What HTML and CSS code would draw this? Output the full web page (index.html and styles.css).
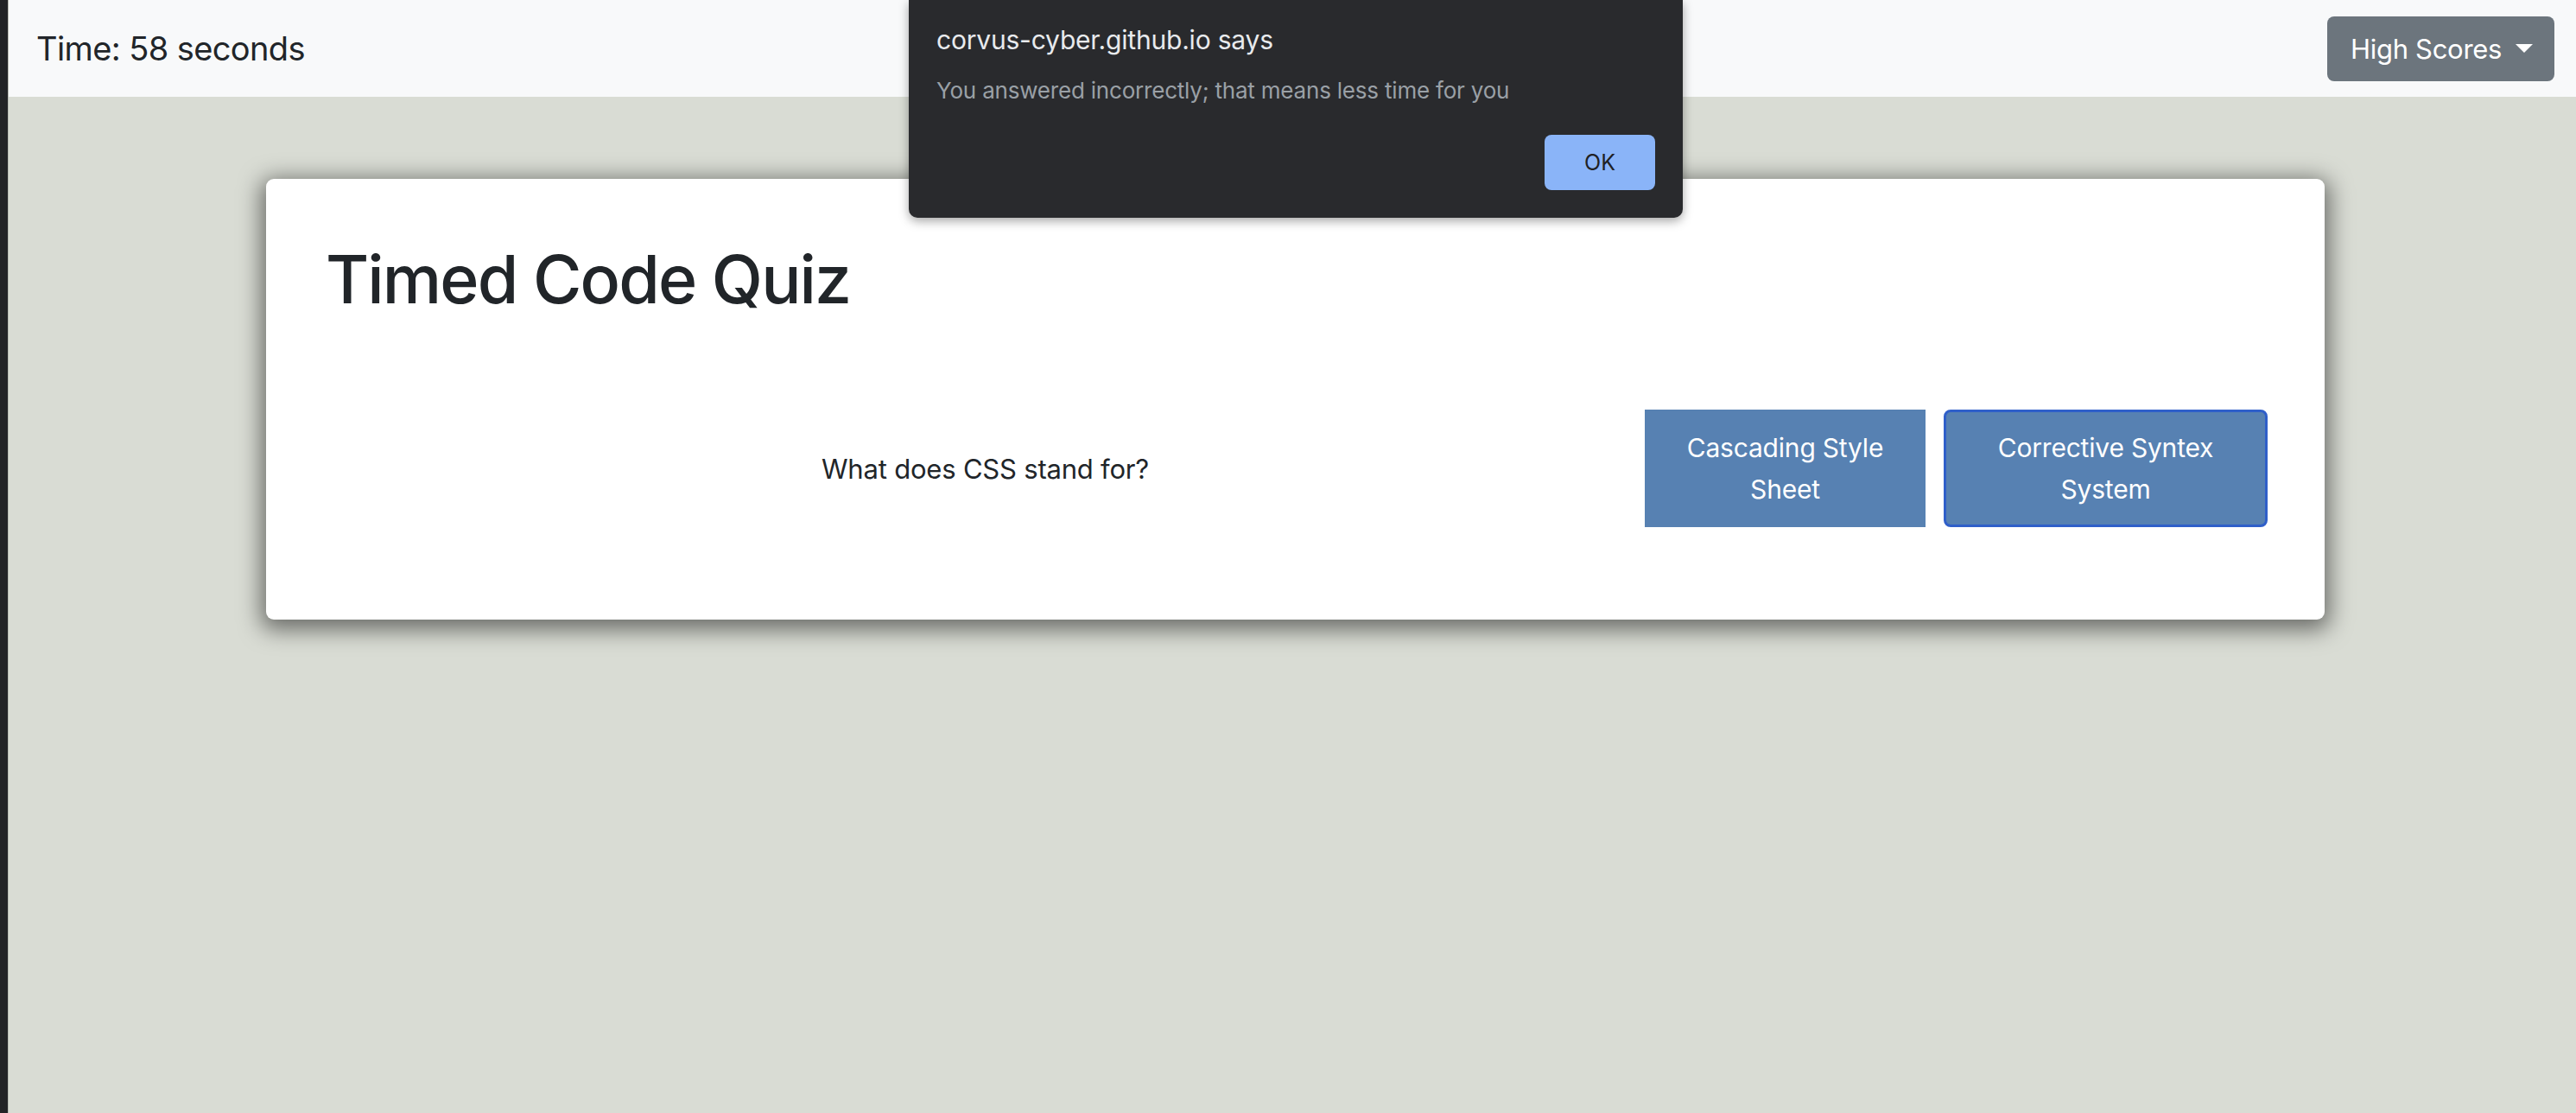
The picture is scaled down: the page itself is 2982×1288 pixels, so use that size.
FILE: index.html
```html
<!DOCTYPE html>
<html lang="en">
<head>
<meta charset="utf-8">
<title>Timed Code Quiz</title>
<link rel="stylesheet" href="styles.css">
</head>
<body>
<div class="screen">
  <div class="edge"></div>
  <div class="page">
    <nav class="navbar">
      <span class="brand">Time: 58 seconds</span>
      <button class="dd-btn">High Scores<span class="caret"></span></button>
    </nav>
    <main class="content">
      <section class="card">
        <h1 class="title">Timed Code Quiz</h1>
        <div class="qrow">
          <div class="question">What does CSS stand for?</div>
          <div class="answers">
            <button class="ans ans-a">Cascading Style Sheet</button>
            <button class="ans ans-b">Corrective Syntex System</button>
          </div>
        </div>
      </section>
    </main>
  </div>
  <div class="dialog">
    <div class="dlg-title">corvus-cyber.github.io says</div>
    <div class="dlg-msg">You answered incorrectly; that means less time for you</div>
    <div class="dlg-actions"><button class="dlg-ok">OK</button></div>
  </div>
</div>
</body>
</html>
```

FILE: styles.css
```css
* { box-sizing: border-box; }
html, body { margin: 0; padding: 0; }
body {
  width: 2982px;
  height: 1288px;
  overflow: hidden;
  font-family: Inter, "Liberation Sans", sans-serif;
  background: #d9dcd4;
}
.screen {
  position: relative;
  display: flex;
  width: 2982px;
  height: 1288px;
}
.edge {
  width: 10px;
  flex: 0 0 10px;
  background: #232427;
  border-right: 1px solid #b9bcb5;
}
.page {
  flex: 1;
  display: flex;
  flex-direction: column;
  background: #d9dcd4;
}
.navbar {
  height: 112px;
  flex: 0 0 112px;
  background: #f8f9fa;
  display: flex;
  align-items: center;
  justify-content: space-between;
  padding: 0 25px 0 32px;
}
.brand {
  font-size: 38px;
  color: #212529;
  letter-spacing: -0.6px;
  margin-top: -1px;
}
.dd-btn {
  height: 75px;
  width: 263px;
  border: none;
  border-radius: 8px;
  background: #6c757d;
  color: #ffffff;
  font-family: Inter, "Liberation Sans", sans-serif;
  font-size: 31px;
  display: flex;
  align-items: center;
  padding: 0 0 0 27px;
  letter-spacing: -0.3px;
}
.caret {
  width: 0;
  height: 0;
  margin-left: 16px;
  border-top: 10px solid #ffffff;
  border-left: 10px solid transparent;
  border-right: 10px solid transparent;
}
.content {
  flex: 1;
  padding: 95px 0 0 298px;
}
.card {
  width: 2383px;
  height: 510px;
  background: #ffffff;
  border-radius: 9px;
  box-shadow: 0 6px 26px 6px rgba(0, 0, 0, 0.5);
  padding: 68px 66px 0 69px;
}
.title {
  margin: 0;
  font-size: 77px;
  font-weight: 500;
  line-height: 96px;
  color: #212529;
  letter-spacing: -1.9px;
}
.qrow {
  display: flex;
  align-items: center;
  margin-top: 103px;
}
.question {
  flex: 1;
  text-align: center;
  font-size: 31px;
  color: #212529;
  letter-spacing: -0.2px;
}
.answers {
  display: flex;
  gap: 21px;
}
.ans {
  height: 136px;
  border: none;
  background: #5781b2;
  color: #ffffff;
  font-family: Inter, "Liberation Sans", sans-serif;
  font-size: 30px;
  line-height: 48px;
  padding: 0 30px;
  letter-spacing: -0.2px;
}
.ans-a { width: 325px; border-radius: 0; }
.ans-b {
  width: 375px;
  border: 3px solid #2f5fc9;
  border-radius: 8px;
}
.dialog {
  position: absolute;
  top: 0;
  left: 1052px;
  width: 896px;
  height: 252px;
  background: #292a2d;
  border-radius: 0 0 10px 10px;
  box-shadow: 0 4px 12px rgba(0, 0, 0, 0.35);
  padding: 28px 32px 0 32px;
  display: flex;
  flex-direction: column;
}
.dlg-title {
  color: #e8eaed;
  font-size: 30px;
  line-height: 36px;
  letter-spacing: -0.2px;
}
.dlg-msg {
  margin-top: 25px;
  color: #9aa0a6;
  font-size: 26px;
  line-height: 32px;
  letter-spacing: -0.2px;
}
.dlg-actions {
  display: flex;
  justify-content: flex-end;
  margin-top: 35px;
}
.dlg-ok {
  width: 128px;
  height: 64px;
  border: none;
  border-radius: 8px;
  background: #8ab4f8;
  color: #202124;
  font-family: Inter, "Liberation Sans", sans-serif;
  font-size: 25px;
}
```
